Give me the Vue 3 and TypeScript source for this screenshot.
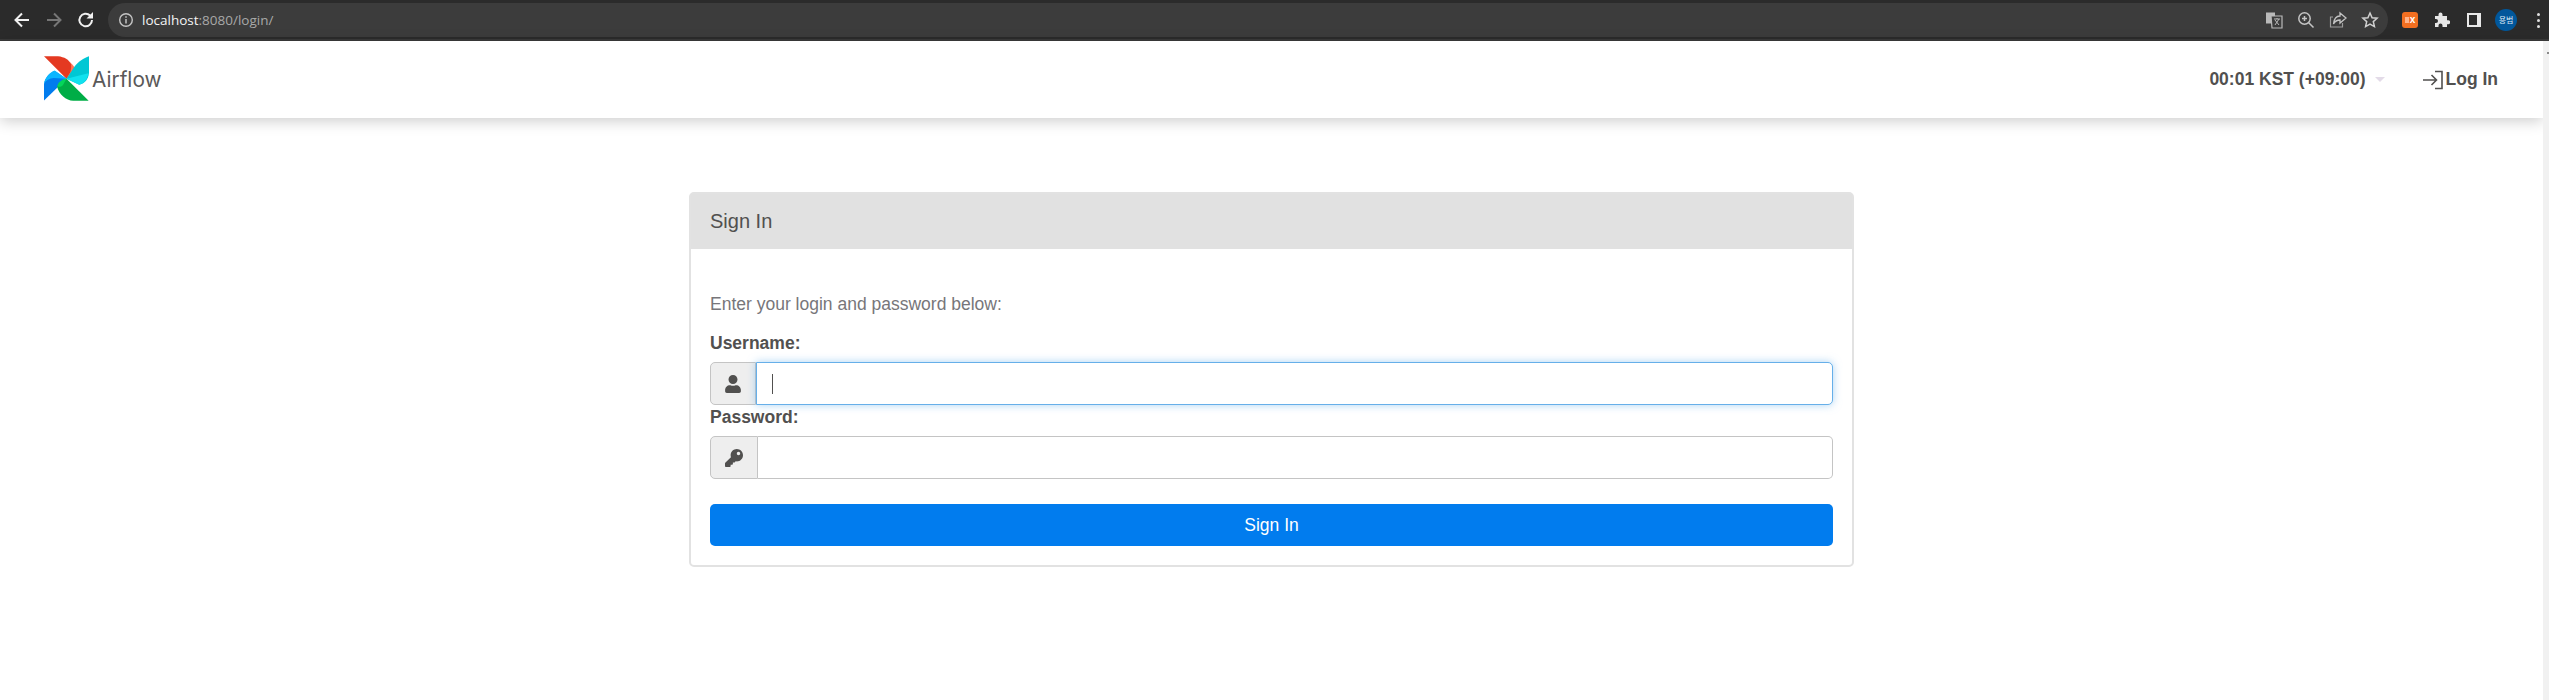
<script setup lang="ts">
const title: string = 'Airflow'
</script>

<template>
  <div class="page">
    <header class="chrome">
      <div class="nav-icons">
        <svg width="20" height="20" viewBox="0 0 20 20" class="ic"><path d="M17 10H4M10 3.500 3.500 10l6.500 6.500" fill="none" stroke="#f1f1f1" stroke-width="2"/></svg>
        <svg width="20" height="20" viewBox="0 0 20 20" class="ic"><path d="M3 10h13M10 3.500 16.500 10 10 16.500" fill="none" stroke="#767676" stroke-width="2"/></svg>
        <svg width="20" height="20" viewBox="0 0 20 20" class="ic"><path d="M16 10a6.300 6.300 0 1 1-1.900-4.500" fill="none" stroke="#f1f1f1" stroke-width="2"/><path d="M17 2v6.500h-6.500z" fill="#f1f1f1"/></svg>
      </div>
      <div class="omnibox">
        <svg width="16" height="16" viewBox="0 0 16 16" class="info"><circle cx="8" cy="8" r="6.300" fill="none" stroke="#c4c4c4" stroke-width="1.400"/><path d="M8 7v4.500M8 4.300v1.500" stroke="#c4c4c4" stroke-width="1.500"/></svg>
        <span class="url"><span class="host">localhost</span>:8080/login/</span>
        <div class="omni-right">
          <svg width="18" height="18" viewBox="0 0 18 18"><path d="M1 1.500h9v11H1z" fill="#b9b9b9"/><path d="M6 5h11v12H7z" fill="#3c3c3c" stroke="#b9b9b9" stroke-width="1.200"/><path d="M9 8h6M12 7v1M10 14l4-6M10 9l4 5" stroke="#b9b9b9" fill="none"/></svg>
          <svg width="18" height="18" viewBox="0 0 18 18"><circle cx="7.500" cy="7.500" r="5.700" fill="none" stroke="#c4c4c4" stroke-width="1.500"/><path d="m11.500 11.500 5 5M5 7.500h5M7.500 5v5" stroke="#c4c4c4" stroke-width="1.500"/></svg>
          <svg width="18" height="18" viewBox="0 0 18 18"><path d="M4 6H1.500v10h12V12" fill="none" stroke="#9c9c9c" stroke-width="1.200"/><path d="M11 2l6 5-6 5V9C8 9 6 10 4.500 13 5 8 7 5 11 5z" fill="none" stroke="#c4c4c4" stroke-width="1.300"/></svg>
          <svg width="18" height="18" viewBox="0 0 18 18"><path d="m9 2 2.100 4.700 5 .5-3.800 3.400 1.100 5L9 13l-4.400 2.600 1.100-5L1.900 7.200l5-.5z" fill="none" stroke="#d0d0d0" stroke-width="1.500"/></svg>
        </div>
      </div>
      <div class="ext-icons">
        <span class="cell"><span class="ext-x"><i></i>x</span></span>
        <span class="cell"><svg width="16" height="16" viewBox="0 0 16 16"><path d="M1 5h3.500V3.500a2 2 0 0 1 4 0V5H13v4.300h1.200a2 2 0 0 1 0 4H13V16H8.500v-1.500a2 2 0 0 0-4 0V16H1v-4h1a2 2 0 0 0 0-4H1z" fill="#e6e6e6" transform="translate(0 -1)"/></svg></span>
        <span class="cell"><span class="panel"><i></i></span></span>
        <span class="cell"><span class="avatar">용범</span></span>
        <span class="cell"><span class="kebab"><i></i><i></i><i></i></span></span>
      </div>
    </header>
    <div class="viewport">
      <div class="content">
        <nav class="navbar">
          <div class="brand">
            <svg class="logo" width="45" height="45" viewBox="133 165 134 133">
              <path d="M205 180c14 8 22 20 23 33l-28 19z" fill="#ff7557"/>
              <path d="M133 165h42c18 2 33 10 38 24 2 8 0 18-2 24l-11 19z" fill="#e43921"/>
              <path d="M267 165v50c-2 18-12 31-29 35l-38-18 25-38c10-12 26-24 42-29z" fill="#00c7d4"/>
              <path d="M200 232l65-16c-3 18-12 30-27 34z" fill="#11e1ee"/>
              <path d="M133 297v-50c3-17 17-33 32-38l35 23z" fill="#017cee"/>
              <path d="M133 247c3-18 17-34 32-39l35 24-38-2c-13 1-24 7-29 17z" fill="#0cb6ff"/>
              <path d="M266 298h-46c-22-2-42-18-48-43l28-23z" fill="#00ad46"/>
              <path d="M172 255c3-12 15-22 28-23l-10 18c-4 6-10 8-18 5z" fill="#04d659"/>
            </svg>
            <span class="brand-name">{{ title }}</span>
          </div>
          <div class="nav-right">
            <span class="clock">00:01 KST (+09:00)</span>
            <span class="caret"></span>
            <a class="login">
              <svg width="22" height="20" viewBox="0 0 22 20"><path d="M13 1.500h7v17h-7M1 10h13M9.500 5l5 5-5 5" fill="none" stroke="#51504f" stroke-width="1.600"/></svg>
              <span>Log In</span>
            </a>
          </div>
        </nav>
        <main class="main">
          <section class="card">
            <div class="card-head">Sign In</div>
            <div class="card-body">
              <p class="hint">Enter your login and password below:</p>
              <div class="label">Username:</div>
              <div class="group focused">
                <span class="addon">
                  <svg width="16" height="18" viewBox="0 0 448 512"><path d="M224 256c70.700 0 128-57.300 128-128S294.700 0 224 0 96 57.300 96 128s57.300 128 128 128zm89.600 32h-16.700c-22.200 10.200-46.900 16-72.900 16s-50.600-5.800-72.900-16h-16.700C60.200 288 0 348.200 0 422.400V464c0 26.500 21.500 48 48 48h352c26.500 0 48-21.500 48-48v-41.600c0-74.200-60.200-134.400-134.400-134.400z" fill="#51504f"/></svg>
                </span>
                <div class="field"><span class="cursor"></span></div>
              </div>
              <div class="label">Password:</div>
              <div class="group">
                <span class="addon">
                  <svg width="18" height="18" viewBox="0 0 512 512"><path d="M512 176.001C512 273.203 433.202 352 336 352c-11.220 0-22.190-1.062-32.827-3.069l-24.012 27.014A23.999 23.999 0 0 1 261.223 384H224v40c0 13.255-10.745 24-24 24h-40v40c0 13.255-10.745 24-24 24H24c-13.255 0-24-10.745-24-24v-78.059c0-6.365 2.529-12.470 7.029-16.971l161.802-161.802C163.108 213.814 160 195.271 160 176 160 78.798 238.797.001 335.999 0 433.488-.001 512 78.511 512 176.001zM336 128c0 26.510 21.490 48 48 48s48-21.490 48-48-21.490-48-48-48-48 21.490-48 48z" fill="#51504f"/></svg>
                </span>
                <div class="field"></div>
              </div>
              <button class="submit" type="button">Sign In</button>
            </div>
          </section>
        </main>
      </div>
      <div class="scrollbar"><span class="arrow"></span></div>
    </div>
  </div>
</template>

<style>
html, body { margin: 0; background: #fff; overflow: hidden; }
</style>

<style scoped>
.page { width: 2549px; height: 700px; overflow: hidden; display: flex; flex-direction: column; font-family: "Liberation Sans", Arial, sans-serif; color: #51504f; }
.chrome { height: 41px; flex: none; box-sizing: border-box; background: #2b2b2b; border-bottom: 2px solid #3a3a3a; display: flex; align-items: flex-start; padding-top: 3px; }
.nav-icons { width: 108px; height: 34px; flex: none; display: flex; align-items: center; padding-left: 12px; gap: 12px; box-sizing: border-box; }
.omnibox { width: 2280px; height: 34px; flex: none; border-radius: 17px; background: #3c3c3c; display: flex; align-items: center; box-sizing: border-box; padding: 0 9px 0 10px; }
.url { margin-left: 8px; font: 13.500px "Open Sans", sans-serif; color: #a8a8a8; }
.host { color: #f4f4f4; }
.omni-right { margin-left: auto; display: flex; align-items: center; gap: 14px; }
.ext-icons { flex: 1; height: 34px; display: flex; align-items: center; padding-left: 6px; }
.cell { width: 32px; height: 34px; flex: none; display: flex; align-items: center; justify-content: center; }
.ext-x { width: 16px; height: 16px; border-radius: 3px; background: #f26f21; color: #fff; font: bold 10px/16px "Liberation Sans", sans-serif; display: flex; align-items: center; justify-content: center; }
.ext-x i { width: 4px; height: 6px; background: #ffb48a; margin-right: 1px; }
.panel { width: 14px; height: 14px; background: #e8e8e8; display: flex; }
.panel i { width: 8px; height: 10px; margin: 2px; background: #2b2b2b; }
.avatar { width: 22px; height: 22px; border-radius: 50%; background: #01579b; color: #dce9f5; font: 8px/22px "Noto Sans CJK KR", sans-serif; text-align: center; }
.kebab { display: flex; flex-direction: column; gap: 3px; }
.kebab i { width: 3px; height: 3px; background: #e0e0e0; border-radius: 50%; }
.viewport { flex: 1; display: flex; min-height: 0; }
.content { flex: 1; min-width: 0; }
.scrollbar { width: 6px; flex: none; background: #f1f1f1; display: flex; justify-content: flex-end; padding-top: 11px; box-sizing: border-box; }
.arrow { width: 2px; height: 2px; background: #8a8a8a; }
.navbar { height: 77px; box-sizing: border-box; display: flex; align-items: center; justify-content: space-between; padding: 0 45px 0 44px; background: #fff; box-shadow: 0 3px 14px rgba(0,0,0,.2); }
.brand { display: flex; align-items: center; margin-top: -3px; }
.logo { display: block; }
.brand-name { margin-left: 3px; margin-top: 3px; font: 400 20.800px "Inter", "Open Sans", sans-serif; color: #5a5959; }
.nav-right { display: flex; align-items: center; font-weight: 700; font-size: 17.500px; }
.caret { margin-left: 9px; border: 5px solid transparent; border-top-color: #e3dbe8; border-bottom: 0; }
.login { margin-left: 37px; display: flex; align-items: center; gap: 2px; }
.main { padding-top: 74px; }
.card { width: 1165px; margin: 0 auto; box-sizing: border-box; border: 2px solid #e2e2e2; border-radius: 5px; background: #fff; }
.card-head { height: 55px; background: #e1e1e1; font-size: 20px; line-height: 55px; padding-left: 19px; }
.card-body { padding: 43px 19px 19px; }
.hint { margin: 0 0 14px; font-size: 17.500px; line-height: 25px; color: #77767a; }
.label { font-size: 17.500px; font-weight: 700; line-height: 25px; padding-bottom: 6px; color: #51504f; }
.group { height: 43px; display: flex; box-sizing: border-box; }
.addon { width: 48px; flex: none; box-sizing: border-box; background: #eee; border: 1px solid #c4c4c4; border-radius: 5px 0 0 5px; display: flex; align-items: center; justify-content: center; }
.field { flex: 1; box-sizing: border-box; background: #fff; border: 1px solid #c4c4c4; border-left: 0; border-radius: 0 5px 5px 0; display: flex; align-items: center; }
.group.focused .addon { width: 46px; }
.group.focused .field { border: 1px solid #66afe9; border-radius: 0 5px 5px 0; box-shadow: 0 0 9px rgba(102,175,233,.55); }
.cursor { width: 1px; height: 20px; margin-left: 15px; background: #51504f; }
.submit { display: block; width: 100%; height: 42px; margin-top: 25px; border: 0; border-radius: 5px; background: #017cee; color: #fff; font: 17.500px "Liberation Sans", sans-serif; }
</style>
